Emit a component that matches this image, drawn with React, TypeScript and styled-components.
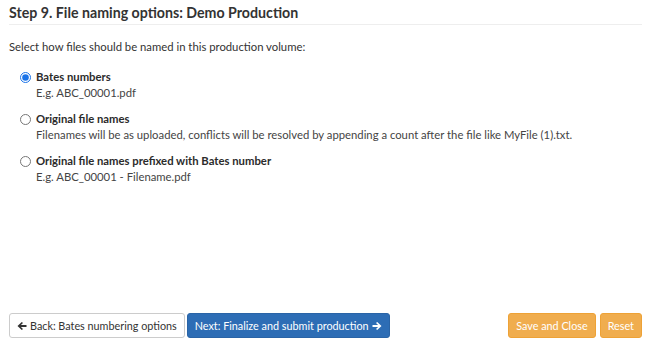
import React, { useState } from 'react';
import styled, { createGlobalStyle } from 'styled-components';

const GlobalStyle = createGlobalStyle`
  html, body {
    margin: 0;
    padding: 0;
    height: 100%;
    background: #ffffff;
  }
  body {
    font-family: Lato, "Open Sans", Arial, sans-serif;
    font-size: 11.3px;
    color: #333333;
  }
  #root {
    height: 100%;
  }
`;

const options = [
  {
    id: 'bates',
    label: 'Bates numbers',
    hint: 'E.g. ABC_00001.pdf',
  },
  {
    id: 'original',
    label: 'Original file names',
    hint: 'Filenames will be as uploaded, conflicts will be resolved by appending a count after the file like MyFile (1).txt.',
  },
  {
    id: 'prefixed',
    label: 'Original file names prefixed with Bates number',
    hint: 'E.g. ABC_00001 - Filename.pdf',
  },
];

const ArrowLeft = () => (
  <svg width="10" height="10" viewBox="0 0 10 10">
    <path d="M0.5 5 L4.8 0.9 L6 2.1 L3.9 4.1 H9.5 V5.9 H3.9 L6 7.9 L4.8 9.1 Z" fill="currentColor" />
  </svg>
);

const ArrowRight = () => (
  <svg width="10" height="10" viewBox="0 0 10 10">
    <path d="M9.5 5 L5.2 0.9 L4 2.1 L6.1 4.1 H0.5 V5.9 H6.1 L4 7.9 L5.2 9.1 Z" fill="currentColor" />
  </svg>
);

const App: React.FC = () => {
  const [selected, setSelected] = useState('bates');

  return (
    <>
      <GlobalStyle />
      <Page>
        <Title>Step 9. File naming options: Demo Production</Title>
        <Intro>Select how files should be named in this production volume:</Intro>

        <OptionList>
          {options.map((opt) => (
            <Option key={opt.id}>
              <Radio
                type="radio"
                name="naming"
                checked={selected === opt.id}
                onChange={() => setSelected(opt.id)}
              />
              <OptionText>
                <OptionLabel>{opt.label}</OptionLabel>
                <OptionHint>{opt.hint}</OptionHint>
              </OptionText>
            </Option>
          ))}
        </OptionList>

        <Footer>
          <ButtonGroup>
            <Button variant="default">
              <ArrowLeft /> Back: Bates numbering options
            </Button>
            <Button variant="primary">
              Next: Finalize and submit production <ArrowRight />
            </Button>
          </ButtonGroup>
          <ButtonGroup $gap={4}>
            <Button variant="warning">Save and Close</Button>
            <Button variant="warning">Reset</Button>
          </ButtonGroup>
        </Footer>
      </Page>
    </>
  );
};

const Page = styled.div`
  box-sizing: border-box;
  height: 100%;
  display: flex;
  flex-direction: column;
  padding: 3px 8px 13px 9px;
`;

const Title = styled.h2`
  margin: 0;
  padding-bottom: 2px;
  border-bottom: 1px solid #eeeeee;
  font-size: 14.2px;
  font-weight: 700;
  color: #333333;
  line-height: 19px;
`;

const Intro = styled.p`
  margin: 14px 0 0;
  line-height: 16px;
`;

const OptionList = styled.div`
  display: flex;
  flex-direction: column;
  gap: 10px;
  margin-top: 14px;
  padding-left: 11px;
`;

const Option = styled.label`
  display: flex;
  align-items: flex-start;
  gap: 5px;
  cursor: pointer;
`;

const Radio = styled.input`
  width: 11px;
  height: 11px;
  margin: 3px 0 0;
  accent-color: #1a73e8;
`;

const OptionText = styled.div`
  display: flex;
  flex-direction: column;
  line-height: 16px;
`;

const OptionLabel = styled.span`
  font-weight: 700;
  color: #2b2b2b;
`;

const OptionHint = styled.span`
  font-weight: 400;
  color: #444444;
`;

const Footer = styled.div`
  margin-top: auto;
  display: flex;
  justify-content: space-between;
  align-items: center;
`;

const ButtonGroup = styled.div<{ $gap?: number }>`
  display: flex;
  gap: ${(p) => p.$gap ?? 2}px;
`;

const palette = {
  default: { bg: '#ffffff', border: '#cccccc', color: '#333333' },
  primary: { bg: '#2d6db5', border: '#2a64a6', color: '#ffffff' },
  warning: { bg: '#f0ad4e', border: '#eea236', color: '#ffffff' },
};

const Button = styled.button<{ variant: keyof typeof palette }>`
  display: inline-flex;
  align-items: center;
  gap: 3px;
  height: 25px;
  padding: 0 7px;
  font-family: inherit;
  font-size: 10.8px;
  border-radius: 3px;
  cursor: pointer;
  background: ${(p) => palette[p.variant].bg};
  border: 1px solid ${(p) => palette[p.variant].border};
  color: ${(p) => palette[p.variant].color};
`;

export default App;
